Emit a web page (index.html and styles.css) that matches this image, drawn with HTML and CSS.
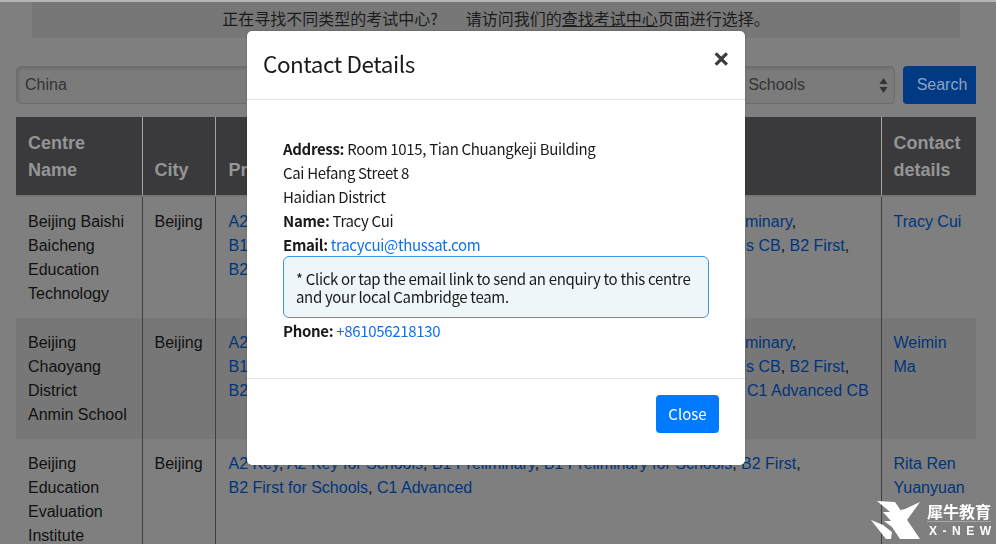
FILE: index.html
```html
<!DOCTYPE html>
<html lang="zh">
<head>
<meta charset="utf-8">
<title>Contact Details</title>
<link rel="stylesheet" href="styles.css">
</head>
<body>
<div class="page">
  <p class="notice">正在寻找不同类型的考试中心?<span class="notice-gap">请访问我们的<a href="#">查找考试中心</a>页面进行选择。</span></p>
  <form class="search">
    <div class="field field-country">China</div>
    <div class="field field-exam">A2 Key for Schools
      <svg class="sort" width="9" height="15" viewBox="0 0 9 15"><path d="M4.5 0 8.500 6H.5zM4.500 15 .5 9h8z"/></svg>
    </div>
    <button type="button" class="search-btn">Search</button>
  </form>
  <table class="centres">
    <colgroup><col class="c-name"><col class="c-city"><col><col class="c-contact"></colgroup>
    <thead>
      <tr><th>Centre Name</th><th>City</th><th class="products-head">Products</th><th>Contact details</th></tr>
    </thead>
    <tbody>
      <tr>
        <td>Beijing Baishi Baicheng Education Technology</td>
        <td>Beijing</td>
        <td class="products"><a href="#">A2 Key</a>, <a href="#">A2 Key CB</a>, <a href="#">A2 Key for Schools</a>, <a href="#">A2 Key for Schools CB</a>, <a href="#">B1 Preliminary</a>, <a href="#">B1 Preliminary CB</a>, <a href="#">B1 Preliminary for Schools</a>, <a href="#">B1 Preliminary for Schools CB</a>, <a href="#">B2 First</a>, <a href="#">B2 First for Schools</a></td>
        <td><a href="#">Tracy Cui</a></td>
      </tr>
      <tr>
        <td>Beijing Chaoyang District<br>Anmin School</td>
        <td>Beijing</td>
        <td class="products"><a href="#">A2 Key</a>, <a href="#">A2 Key CB</a>, <a href="#">A2 Key for Schools</a>, <a href="#">A2 Key for Schools CB</a>, <a href="#">B1 Preliminary</a>, <a href="#">B1 Preliminary CB</a>, <a href="#">B1 Preliminary for Schools</a>, <a href="#">B1 Preliminary for Schools CB</a>, <a href="#">B2 First</a>, <a href="#">B2 First CB</a>, <a href="#">B2 First for Schools</a>, <a href="#">B2 First for Schools CB</a>, <a href="#">C1 Advanced</a>, <a href="#">C1 Advanced CB</a></td>
        <td><a href="#">Weimin Ma</a></td>
      </tr>
      <tr>
        <td>Beijing Education Evaluation Institute</td>
        <td>Beijing</td>
        <td class="products"><a href="#">A2 Key</a>, <a href="#">A2 Key for Schools</a>, <a href="#">B1 Preliminary</a>, <a href="#">B1 Preliminary for Schools</a>, <a href="#">B2 First</a>, <a href="#">B2 First for Schools</a>, <a href="#">C1 Advanced</a></td>
        <td><a href="#">Rita Ren Yuanyuan</a></td>
      </tr>
    </tbody>
  </table>
</div>

<div class="modal">
  <header class="modal-head">
    <h2>Contact Details</h2>
    <span class="modal-x">×</span>
  </header>
  <div class="modal-body">
    <p><b>Address:</b> Room 1015, Tian Chuangkeji Building<br>Cai Hefang Street 8<br>Haidian District<br><b>Name:</b> Tracy Cui<br><b>Email:</b> <a href="#">tracycui@thussat.com</a></p>
    <div class="hint">* Click or tap the email link to send an enquiry to this centre and your local Cambridge team.</div>
    <p class="phone"><b>Phone:</b> <a href="#">+861056218130</a></p>
  </div>
  <footer class="modal-foot"><button type="button" class="close-btn">Close</button></footer>
</div>

<div class="brand">
  <svg class="brand-mark" width="50" height="38" viewBox="0 0 50 38"><path fill="#fff" d="M6 0 24 1 49 38 29 38 21 26 13 20 20 20 12 11 19 11zM49 1 36 19 31 13 25 17 21 11 34 8zM0 19 12 24 21 31 20 38 15 38z"/></svg>
  <div class="brand-text"><div class="brand-cn">犀牛教育</div><div class="brand-en">X-NEW</div></div>
</div>
</body>
</html>
```
FILE: styles.css
```css
* { box-sizing: border-box; }
html, body { margin: 0; height: 544px; overflow: hidden; }
body {
  background: #7f7f7f;
  border-top: 2px solid #b4b4b4;
  font-family: "Liberation Sans", "Noto Sans CJK SC", sans-serif;
  font-size: 16px;
  line-height: 24px;
  color: #111;
}
a { color: #00357c; text-decoration: none; }
.page { padding: 0 20px 0 16px; }

.notice {
  margin: 0 16px;
  width: 928px;
  height: 36px;
  background: #777;
  text-align: center;
  line-height: 32px;
  font-family: "Noto Sans CJK SC", sans-serif;
  color: #1c1c1c;
}
.notice a { color: inherit; text-decoration: underline; }
.notice-gap { margin-left: 28px; }

.search { display: flex; gap: 8px; margin-top: 28px; height: 38px; }
.field {
  display: flex;
  align-items: center;
  padding: 0 8px;
  background: #7b7b7b;
  border: 1px solid #6c6c6c;
  border-radius: 5px;
  box-shadow: inset 2px 2px 3px rgba(0, 0, 0, .1);
  color: #333;
  position: relative;
}
.field-country { flex: 1; }
.field-exam { width: 235px; margin-left: 2px; }
.sort { position: absolute; right: 6px; top: 11px; fill: #333; }
.search-btn {
  width: 73px;
  padding: 0 0 0 5px;
  border: 0;
  border-radius: 4px 0 0 4px;
  background: #003a85;
  color: #8fa3c0;
  font: inherit;
}

.centres {
  width: 960px;
  margin-top: 13px;
  border-collapse: collapse;
  table-layout: fixed;
}
.c-name { width: 126px; }
.c-city { width: 73px; }
.c-contact { width: 95px; }
.centres th {
  height: 79px;
  padding: 12px 12px 11px;
  vertical-align: bottom;
  text-align: left;
  font-size: 18px;
  line-height: 27px;
  background: #3a3a3c;
  color: #959595;
  border-left: 1px solid #a3a3a3;
  border-bottom: 2px solid #757575;
}
.centres th:first-child, .centres td:first-child { border-left: 0; }
.centres td {
  padding: 13px 12px 12px;
  vertical-align: top;
  border-left: 1px solid #3f3f3f;
}
.centres .products { padding-left: 13px; padding-right: 11px; }
.centres .products-head { padding-left: 13px; }
.products a { white-space: nowrap; }
.centres tbody tr:nth-child(2) td { background: #777; }

.modal {
  position: fixed;
  left: 247px;
  top: 31px;
  width: 498px;
  height: 434px;
  display: flex;
  flex-direction: column;
  background: #fff;
  border-radius: 5px;
  box-shadow: 0 0 2px rgba(0, 0, 0, .3);
  font-family: "Noto Sans CJK SC", sans-serif;
  font-size: 15px;
  letter-spacing: -.33px;
  color: #1a1a1a;
}
.modal a { color: #0d72f0; }
.modal-head {
  height: 69px;
  padding: 14px 16px;
  display: flex;
  justify-content: space-between;
  border-bottom: 1px solid #e2e2e2;
}
.modal-head h2 { margin: 0; font-size: 22.5px; line-height: 36px; font-weight: 400; letter-spacing: -.45px; }
.modal-x {
  font-size: 18px;
  line-height: 26px;
  font-weight: 900;
  color: #3c3c3c;
  margin-right: -1px;
  -webkit-text-stroke: 1px #3c3c3c;
}
.modal-body { flex: 1; padding: 37px 36px 0; }
.modal-body p { margin: 0; }
.modal-body b { font-weight: 700; }
.hint {
  margin-top: -1px;
  padding: 13px 12px 10px;
  height: 62px;
  line-height: 18px;
  background: #eff6fa;
  border: 1px solid #3a9be0;
  border-radius: 6px;
}
.modal-body .phone { margin-top: 1px; }
.modal-foot {
  height: 87px;
  padding: 16px 26px;
  display: flex;
  justify-content: flex-end;
  align-items: flex-start;
  border-top: 1px solid #e2e2e2;
}
.close-btn {
  width: 63px;
  height: 38px;
  border: 0;
  border-radius: 4px;
  background: #007bff;
  color: #fff;
  font: inherit;
  font-size: 15px;
}

.brand {
  position: fixed;
  left: 871px;
  top: 501px;
  display: flex;
  gap: 6px;
  color: #fff;
}
.brand-text { width: 64px; }
.brand-cn {
  font-family: "Noto Sans CJK SC", sans-serif;
  font-weight: 700;
  font-size: 16px;
  line-height: 20px;
  border-bottom: 1px solid rgba(255, 255, 255, .3);
}
.brand-en {
  margin-top: 2px;
  font-family: "Liberation Sans", sans-serif;
  font-weight: 700;
  font-size: 12px;
  line-height: 14px;
  letter-spacing: 5.5px;
  white-space: nowrap;
  padding-left: 2px;
}
```
